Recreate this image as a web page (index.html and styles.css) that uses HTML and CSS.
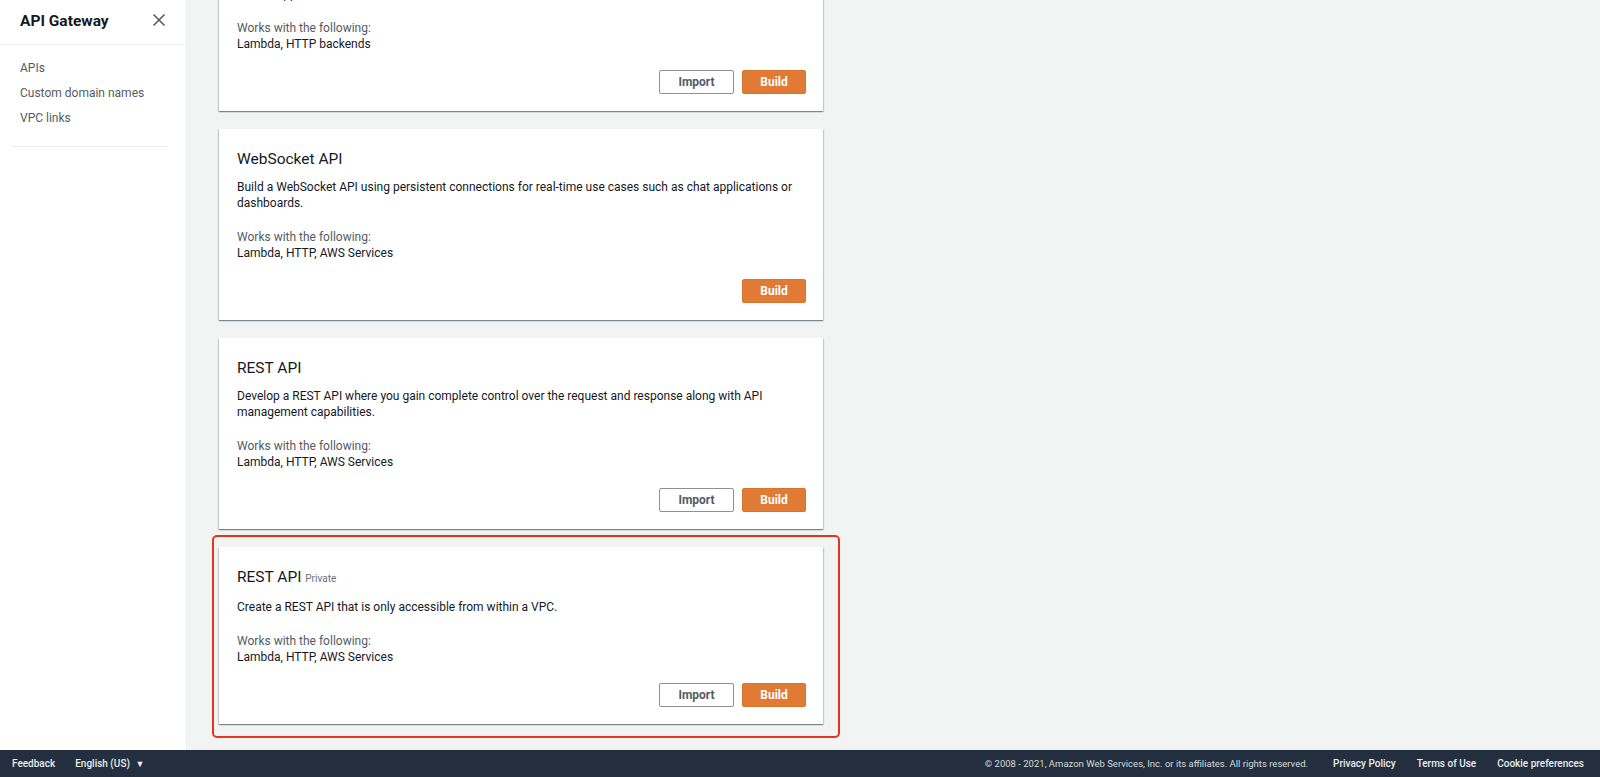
FILE: index.html
```html
<!DOCTYPE html>
<html lang="en">
<head>
  <meta charset="UTF-8">
  <meta name="viewport" content="width=device-width, initial-scale=1.0">
  <title>API Gateway</title>
  <link rel="stylesheet" href="styles.css">
</head>
<body>
  <div class="app">
    <div class="sidebar">
      <div class="sidebar-header">
        <span class="sidebar-title">API Gateway</span>
        <svg class="close" width="14" height="14" viewBox="0 0 14 14">
          <path d="M1.5 1.5 L12.5 12.5 M12.5 1.5 L1.5 12.5" stroke="#545b64" stroke-width="1.6" fill="none"/>
        </svg>
      </div>
      <ul class="nav">
        <li>APIs</li>
        <li>Custom domain names</li>
        <li>VPC links</li>
      </ul>
      <div class="nav-divider"></div>
    </div>

    <div class="main">
      <div class="cards">
        <div class="card">
          <h2 class="card-title">HTTP API</h2>
          <p class="card-desc">Build low-latency and cost-effective REST APIs with built-in features such as OIDC and OAuth2, and native CORS support.</p>
          <div class="works">
            <div class="works-label">Works with the following:</div>
            <div class="works-value">Lambda, HTTP backends</div>
          </div>
          <div class="actions">
            <button class="btn btn-normal">Import</button>
            <button class="btn btn-primary">Build</button>
          </div>
        </div>

        <div class="card">
          <h2 class="card-title">WebSocket API</h2>
          <p class="card-desc">Build a WebSocket API using persistent connections for real-time use cases such as chat applications or dashboards.</p>
          <div class="works">
            <div class="works-label">Works with the following:</div>
            <div class="works-value">Lambda, HTTP, AWS Services</div>
          </div>
          <div class="actions">
            <button class="btn btn-primary">Build</button>
          </div>
        </div>

        <div class="card">
          <h2 class="card-title">REST API</h2>
          <p class="card-desc">Develop a REST API where you gain complete control over the request and response along with API management capabilities.</p>
          <div class="works">
            <div class="works-label">Works with the following:</div>
            <div class="works-value">Lambda, HTTP, AWS Services</div>
          </div>
          <div class="actions">
            <button class="btn btn-normal">Import</button>
            <button class="btn btn-primary">Build</button>
          </div>
        </div>

        <div class="card highlighted">
          <h2 class="card-title">REST API <span class="card-tag">Private</span></h2>
          <p class="card-desc">Create a REST API that is only accessible from within a VPC.</p>
          <div class="works">
            <div class="works-label">Works with the following:</div>
            <div class="works-value">Lambda, HTTP, AWS Services</div>
          </div>
          <div class="actions">
            <button class="btn btn-normal">Import</button>
            <button class="btn btn-primary">Build</button>
          </div>
        </div>
      </div>
    </div>
  </div>

  <div class="footer">
    <div class="footer-left">
      <span class="footer-link">Feedback</span>
      <span class="footer-link lang">English (US) <span class="caret">&#9660;</span></span>
    </div>
    <div class="footer-right">
      <span class="copyright">&copy; 2008 - 2021, Amazon Web Services, Inc. or its affiliates. All rights reserved.</span>
      <span class="footer-link">Privacy Policy</span>
      <span class="footer-link">Terms of Use</span>
      <span class="footer-link">Cookie preferences</span>
    </div>
  </div>
</body>
</html>
```

FILE: styles.css
```css
html, body {
  height: 100%;
}
body {
  font-family: Roboto, "Liberation Sans", Arial, sans-serif;
  margin: 0;
  display: flex;
  flex-direction: column;
  color: #16191f;
  font-size: 12px;
}
.app {
  flex: 1;
  display: flex;
  overflow: hidden;
}
.sidebar {
  width: 186px;
  flex-shrink: 0;
  background: #fff;
  border-right: 1px solid #eaeded;
}
.sidebar-header {
  height: 44px;
  display: flex;
  align-items: center;
  justify-content: space-between;
  padding: 0 20px 0 20px;
  border-bottom: 1px solid #f2f3f3;
}
.sidebar-title {
  font-size: 15.5px;
  font-weight: bold;
  color: #16191f;
  margin-top: -2px;
}
.close {
  margin-top: -5px;
}
.nav {
  list-style: none;
  margin: 0;
  padding: 11px 20px 0;
}
.nav li {
  font-size: 12px;
  line-height: 25px;
  color: #545b64;
}
.nav-divider {
  margin: 15px 18px 0 12px;
  border-top: 1px solid #eaeded;
}
.main {
  flex: 1;
  background: #f2f3f3;
  padding-left: 32px;
  overflow: hidden;
}
.cards {
  width: 604px;
  display: flex;
  flex-direction: column;
  gap: 18px;
  margin-top: -80px;
}
.card {
  background: #fff;
  padding: 20px 17px 17px 18px;
  box-shadow: 0 1px 1px 0 rgba(0,28,36,0.3), 1px 1px 1px 0 rgba(0,28,36,0.15), -1px 1px 1px 0 rgba(0,28,36,0.15);
}
.card-title {
  font-size: 15.5px;
  font-weight: normal;
  line-height: 20px;
  margin: 0 0 10px;
  color: #16191f;
}
.card-tag {
  font-size: 10px;
  color: #687078;
}
.card-desc {
  margin: 0 0 18px;
  line-height: 16px;
}
.works {
  line-height: 16px;
}
.works-label {
  color: #545b64;
}
.actions {
  margin-top: 18px;
  display: flex;
  justify-content: flex-end;
  gap: 8px;
}
.btn {
  height: 24px;
  font-family: inherit;
  font-size: 12px;
  font-weight: bold;
  border-radius: 2px;
  cursor: pointer;
}
.btn-normal {
  width: 75px;
  background: #fff;
  color: #545b64;
  border: 1px solid #8d9196;
}
.btn-primary {
  width: 64px;
  background: #e07a35;
  color: #fff;
  border: 1px solid #d9742f;
}
.highlighted {
  position: relative;
}
.highlighted::after {
  content: "";
  position: absolute;
  top: -12px;
  left: -7px;
  right: -17px;
  bottom: -14px;
  border: 2px solid #e3351e;
  border-radius: 5px;
}
.footer {
  height: 27px;
  flex-shrink: 0;
  background: #232f3e;
  display: flex;
  align-items: center;
  justify-content: space-between;
  padding: 0 16px 0 12px;
  font-size: 10px;
}
.footer-left, .footer-right {
  display: flex;
  align-items: center;
}
.footer-left {
  gap: 20px;
}
.footer-right {
  gap: 21px;
}
.footer-link {
  color: #eaeded;
  font-weight: 500;
}
.caret {
  font-size: 9px;
  margin-left: 3px;
}
.copyright {
  color: #d5dbdb;
  font-size: 9.5px;
  margin-right: 4px;
}
```
